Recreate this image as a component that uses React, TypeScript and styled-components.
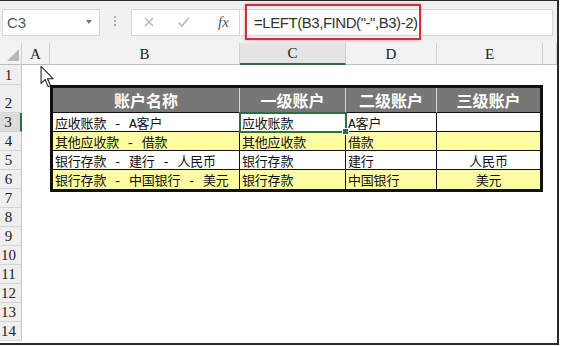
import styled, { createGlobalStyle } from "styled-components";

const GlobalStyle = createGlobalStyle`
  html, body {
    margin: 0;
    padding: 0;
    background: #fff;
  }
`;

const Frame = styled.div`
  position: relative;
  width: 559px;
  height: 345px;
  box-sizing: border-box;
  border-top: 1px solid #2a2a2a;
  border-right: 2px solid #2a2a2a;
  border-bottom: 2px solid #2a2a2a;
  background: #fff;
  overflow: hidden;
  display: flex;
  flex-direction: column;
`;

const Toolbar = styled.div`
  height: 42px;
  flex-shrink: 0;
  background: #f1f1f1;
  display: flex;
  align-items: center;
  padding: 0 4px 0 2px;
`;

const NameBox = styled.div`
  width: 98px;
  height: 27px;
  box-sizing: border-box;
  background: #fff;
  border: 1px solid #d6d6d6;
  display: flex;
  align-items: center;
  justify-content: space-between;
  padding: 0 7px 0 4px;
  font-family: "Liberation Sans", Arial, sans-serif;
  font-size: 15px;
  color: #555;
`;

const DropArrow = styled.span`
  width: 0;
  height: 0;
  border-left: 3px solid transparent;
  border-right: 3px solid transparent;
  border-top: 4px solid #777;
`;

const Grip = styled.span`
  width: 2px;
  height: 12px;
  margin: 0 15px 0 14px;
  background: repeating-linear-gradient(#aaa 0 2px, transparent 2px 4px);
`;

const FxBox = styled.div`
  width: 109px;
  height: 27px;
  box-sizing: border-box;
  background: #fff;
  border: 1px solid #d6d6d6;
  display: flex;
  align-items: center;
  padding-left: 11px;
  gap: 22px;
`;

const Fx = styled.span`
  font-family: "Liberation Serif", serif;
  font-style: italic;
  font-size: 15px;
  color: #555;
  margin-left: 6px;
`;

const FormulaBox = styled.div`
  flex: 1;
  height: 27px;
  box-sizing: border-box;
  background: #fff;
  border: 1px solid #d6d6d6;
  border-left: none;
  display: flex;
  align-items: center;
  padding-left: 5px;
`;

const Highlight = styled.div`
  height: 36px;
  width: 176px;
  box-sizing: border-box;
  border: 2px solid #c8323f;
  box-shadow: 0 0 3px rgba(200, 50, 63, 0.5);
  display: flex;
  align-items: center;
  padding-left: 7px;
  font-family: "Liberation Sans", Arial, sans-serif;
  font-size: 15px;
  letter-spacing: -0.45px;
  color: #333;
  white-space: pre;
`;

const Sheet = styled.div`
  display: grid;
  grid-template-columns: 22px 28px 190px 106px 91px 106px 1fr;
  grid-template-rows: 22px 20px 28px repeat(4, 19px) repeat(8, 19px);
`;

const Corner = styled.div`
  grid-row: 1;
  grid-column: 1;
  background: #f2f2f2;
  border-right: 1px solid #cfcfcf;
  border-bottom: 1px solid #bdbdbd;
  display: flex;
  align-items: flex-end;
  justify-content: flex-end;
  padding: 0 2px 3px 0;
`;

const ColHead = styled.div<{ $col: number; $active?: boolean }>`
  grid-row: 1;
  grid-column: ${({ $col }) => $col};
  background: ${({ $active }) => ($active ? "#e4e4e4" : "#f2f2f2")};
  border-right: 1px solid #d0d0d0;
  border-bottom: ${({ $active }) =>
    $active ? "2px solid #2f6b45" : "1px solid #bdbdbd"};
  display: flex;
  align-items: flex-end;
  justify-content: center;
  padding-bottom: 1px;
  font-family: "Liberation Serif", serif;
  font-size: 15px;
  color: #222;
`;

const RowHead = styled.div<{ $row: number; $active?: boolean }>`
  grid-row: ${({ $row }) => $row};
  grid-column: 1;
  background: ${({ $active }) => ($active ? "#dcdcdc" : "#efefef")};
  border-right: ${({ $active }) =>
    $active ? "2px solid #2f6b45" : "1px solid #c6c6c6"};
  border-bottom: 1px solid #d4d4d4;
  display: flex;
  align-items: flex-end;
  justify-content: center;
  padding-right: 4px;
  font-family: "Liberation Serif", serif;
  font-size: 15px;
  line-height: 17px;
  color: #222;
`;

const Table = styled.div`
  grid-row: 3 / 8;
  grid-column: 3 / 7;
  margin-bottom: -3px;
  border: 3px solid #111;
  display: grid;
  grid-template-columns: 187px 106px 91px 1fr;
  grid-template-rows: 25px repeat(4, 19px);
  z-index: 1;
`;

const HeadCell = styled.div<{ $last?: boolean }>`
  background: #777;
  color: #fff;
  border-right: ${({ $last }) => ($last ? "none" : "1px solid #d8d8d8")};
  border-bottom: 1px solid #111;
  display: flex;
  align-items: center;
  justify-content: center;
  font-family: "Noto Sans CJK SC", sans-serif;
  font-weight: 700;
  font-size: 16px;
`;

const Cell = styled.div<{
  $fill: string;
  $last?: boolean;
  $bottom?: boolean;
  $center?: boolean;
  $selected?: boolean;
}>`
  position: relative;
  background: ${({ $fill }) => $fill};
  border-right: ${({ $last }) => ($last ? "none" : "1px solid #111")};
  border-bottom: ${({ $bottom }) => ($bottom ? "none" : "1px solid #111")};
  display: flex;
  align-items: center;
  justify-content: ${({ $center }) => ($center ? "center" : "flex-start")};
  padding-left: ${({ $center }) => ($center ? "0" : "2px")};
  font-family: "Liberation Mono", "Noto Sans CJK SC", monospace;
  font-size: 13px;
  letter-spacing: -0.2px;
  color: #111;
  white-space: pre;
  ${({ $selected }) =>
    $selected &&
    `
    outline: 2px solid #2f6b45;
    outline-offset: -1px;
    z-index: 2;
    &::after {
      content: "";
      position: absolute;
      right: -4px;
      bottom: -4px;
      width: 5px;
      height: 5px;
      background: #2f6b45;
      border: 1px solid #fff;
    }
  `}
`;

const Cursor = styled.svg`
  position: absolute;
  left: 40px;
  top: 64px;
  z-index: 5;
`;

const WHITE = "#ffffff";
const YELLOW = "#fdfca2";

const columns = ["A", "B", "C", "D", "E", ""];
const headers = ["账户名称", "一级账户", "二级账户", "三级账户"];
const rows = [
  ["应收账款 - A客户", "应收账款", "A客户", ""],
  ["其他应收款 - 借款", "其他应收款", "借款", ""],
  ["银行存款 - 建行 - 人民币", "银行存款", "建行", "人民币"],
  ["银行存款 - 中国银行 - 美元", "银行存款", "中国银行", "美元"],
];

export default function App() {
  return (
    <>
      <GlobalStyle />
      <Frame>
        <Toolbar>
          <NameBox>
            C3
            <DropArrow />
          </NameBox>
          <Grip />
          <FxBox>
            <svg width="12" height="12" viewBox="0 0 12 12">
              <path d="M2 2 L10 10 M10 2 L2 10" stroke="#b5b5b5" strokeWidth="1.4" />
            </svg>
            <svg width="13" height="12" viewBox="0 0 13 12">
              <path d="M1.5 6.5 L5 10 L11.5 2" stroke="#b5b5b5" strokeWidth="1.6" fill="none" />
            </svg>
            <Fx>fx</Fx>
          </FxBox>
          <FormulaBox>
            <Highlight>=LEFT(B3,FIND("-",B3)-2)</Highlight>
          </FormulaBox>
        </Toolbar>
        <Sheet>
          <Corner>
            <svg width="12" height="12" viewBox="0 0 12 12">
              <path d="M12 0 L12 12 L0 12 Z" fill="#b8b8b8" />
            </svg>
          </Corner>
          {columns.map((c, i) => (
            <ColHead key={i} $col={i + 2} $active={c === "C"}>
              {c}
            </ColHead>
          ))}
          {Array.from({ length: 14 }, (_, i) => (
            <RowHead key={i} $row={i + 2} $active={i === 2}>
              {i + 1}
            </RowHead>
          ))}
          <Table>
            {headers.map((h, i) => (
              <HeadCell key={h} $last={i === headers.length - 1}>
                {h}
              </HeadCell>
            ))}
            {rows.map((row, r) =>
              row.map((text, c) => (
                <Cell
                  key={`${r}-${c}`}
                  $fill={r % 2 === 1 ? YELLOW : WHITE}
                  $last={c === 3}
                  $bottom={r === rows.length - 1}
                  $center={c === 3}
                  $selected={r === 0 && c === 1}
                >
                  {text}
                </Cell>
              ))
            )}
          </Table>
        </Sheet>
        <Cursor width="15" height="24" viewBox="0 0 14 22">
          <path
            d="M1 1 L1 17 L4.8 13.4 L7.6 20 L9.8 19 L7 12.6 L12.2 12.6 Z"
            fill="#fff"
            stroke="#222"
            strokeWidth="1"
            strokeLinejoin="round"
          />
        </Cursor>
      </Frame>
    </>
  );
}
